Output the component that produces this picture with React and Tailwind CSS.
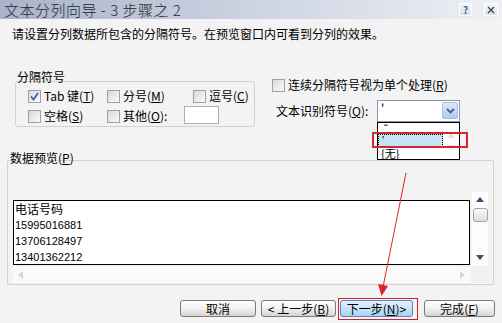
import React from 'react';

const font = "font-['Noto_Sans_CJK_SC','Noto_Sans',sans-serif]";

/**
 * XP style checkbox
 */
function Box({ checked }) {
  return (
    <span className="w-[13px] h-[13px] shrink-0 border border-[#98a2b0] bg-gradient-to-br from-[#d8d8d8] to-[#fbfbfb] flex items-center justify-center">
      {checked && (
        <svg width="9" height="9" viewBox="0 0 9 9">
          <path d="M1 4.5 L3.5 7.5 L8 1" fill="none" stroke="#4b5aa8" strokeWidth="1.8" />
        </svg>
      )}
    </span>
  );
}

function Key({ k }) {
  return (
    <span>(<span className="underline">{k}</span>)</span>
  );
}

function Check({ checked, label, k, suffix, className = '' }) {
  return (
    <div className={`flex items-center gap-[3px] h-[16px] ${className}`}>
      <Box checked={checked} />
      <span className="whitespace-nowrap">{label}<Key k={k} />{suffix}</span>
    </div>
  );
}

function Button({ children, active }) {
  const look = active
    ? 'border-[#5b86b8] bg-gradient-to-b from-[#e6f3fd] to-[#a8d2f2]'
    : 'border-[#7b7b7b] bg-gradient-to-b from-[#ffffff] via-[#f1f1f1] to-[#d4d4d4]';
  return (
    <div className={`h-[17px] rounded-[3px] border ${look} flex items-center justify-center text-[12px] leading-[14px] whitespace-nowrap`}>
      {children}
    </div>
  );
}

function Tri({ dir, color }) {
  const d = {
    up: 'M0 5 L4 0 L8 5 Z',
    down: 'M0 0 L8 0 L4 5 Z',
  }[dir];
  return (
    <svg width="8" height="5" viewBox="0 0 8 5"><path d={d} fill={color} /></svg>
  );
}

function TriH({ dir, color }) {
  const d = dir === 'left' ? 'M5 0 L5 8 L0 4 Z' : 'M0 0 L0 8 L5 4 Z';
  return (
    <svg width="5" height="8" viewBox="0 0 5 8"><path d={d} fill={color} /></svg>
  );
}

export default function App() {
  return (
    <div className={`relative w-[502px] h-[323px] overflow-hidden bg-[#f3f3f3] text-black ${font}`}>
      {/* Title bar */}
      <div className="h-[19px] flex items-center justify-between bg-gradient-to-r from-[#a8b3cb] via-[#ccd3e2] to-[#eef0f5]">
        <span className="pl-[4px] text-[15px] leading-[19px] font-light tracking-[0.5px] text-[#262626] whitespace-nowrap">
          文本分列向导 - 3 步骤之 2
        </span>
        <div className="flex items-center gap-[12px] pr-[4px]">
          <div className="w-[13px] h-[13px] border border-white bg-gradient-to-b from-[#f4f6fa] to-[#d9dee8] flex items-center justify-center text-[10px] leading-none font-bold text-[#3d63a8]">?</div>
          <div className="w-[14px] h-[13px] border border-white bg-gradient-to-b from-[#f4f6fa] to-[#d9dee8] flex items-center justify-center">
            <svg width="8" height="8" viewBox="0 0 8 8">
              <path d="M1 1 L7 7 M7 1 L1 7" stroke="#444" strokeWidth="1.3" />
            </svg>
          </div>
        </div>
      </div>

      {/* Instruction */}
      <p className="mt-[7px] pl-[12px] h-[16px] text-[12px] leading-[16px] whitespace-nowrap">
        请设置分列数据所包含的分隔符号。在预览窗口内可看到分列的效果。
      </p>

      {/* Options */}
      <div className="mt-[28px] flex text-[12px]">
        <div className="ml-[15px] w-[240px]">
          <div className="h-[14px] leading-[14px] pl-[2px]">分隔符号</div>
          <div className="-mt-[3px] h-[46px] border border-[#d3d3cb] rounded-[2px] pt-[6px] pl-[12px]">
            <div className="flex">
              <Check checked label="Tab 键" k="T" className="w-[79px]" />
              <Check label="分号" k="M" className="w-[86px]" />
              <Check label="逗号" k="C" />
            </div>
            <div className="flex items-center mt-[4px]">
              <Check label="空格" k="S" className="w-[79px]" />
              <Check label="其他" k="O" suffix=":" className="w-[77px]" />
              <div className="w-[35px] h-[18px] -mt-[3px] border border-[#a9b0b8] bg-white" />
            </div>
          </div>
        </div>

        <div className="ml-[17px] pt-[7px]">
          <Check label="连续分隔符号视为单个处理" k="R" />
          <div className="mt-[7px] flex items-center h-[22px]">
            <span className="pl-[4px] w-[105px] whitespace-nowrap">文本识别符号<Key k="Q" />:</span>
            <div className="relative w-[83px] h-[22px] border border-[#7f9db9] bg-white flex items-start">
              <span className="flex-1 pl-[3px] leading-[14px]">'</span>
              <div className="mt-[1px] mr-[1px] w-[16px] h-[17px] rounded-[2px] border border-[#a9bde4] bg-gradient-to-b from-[#dfe8fa] to-[#b4c9f0] flex items-center justify-center">
                <svg width="9" height="6" viewBox="0 0 9 6">
                  <path d="M1 1 L4.5 4.5 L8 1" fill="none" stroke="#4d6185" strokeWidth="1.8" />
                </svg>
              </div>

              {/* open list */}
              <div className="absolute left-[-1px] top-[21px] w-[83px] h-[38px] border border-black bg-white flex">
                <div className="w-[65px] text-[11px] leading-none">
                  <div className="h-[11px] pl-[6px] flex items-start font-['Liberation_Sans',sans-serif]">“</div>
                  <div className="h-[13px] pl-[3px] flex items-start border border-dotted border-black bg-[#c4e2f8] font-['Liberation_Sans',sans-serif]">'</div>
                  <div className="h-[12px] pl-[3px] flex items-center whitespace-nowrap">{'{无}'}</div>
                </div>
                <div className="flex-1 flex flex-col items-center justify-around py-[6px]">
                  <Tri dir="up" color="#e9dede" />
                  <Tri dir="down" color="#e9dede" />
                </div>
              </div>

              {/* highlight */}
              <div className="absolute left-[-6px] top-[31px] w-[96px] h-[16px] border-2 border-[#d3272d]" />
            </div>
          </div>
        </div>
      </div>

      {/* Data preview */}
      <div className="mt-[24px] ml-[7px] w-[487px] text-[12px]">
        <div className="h-[14px] leading-[14px] pl-[3px]">数据预览<Key k="P" /></div>
        <div className="-mt-[5px] h-[125px] border border-[#d3d3cb] rounded-[2px] pl-[5px] pt-[31px]">
          <div className="flex">
            <div className="w-[457px]">
              <div className="mt-[8px] h-[65px] overflow-hidden border border-black bg-white pl-[1px]">
                <div className="h-[16px] leading-[16px] text-[12px]">电话号码</div>
                <div className="h-[16px] leading-[16px] text-[11px] font-['Liberation_Sans',sans-serif]">15995016881</div>
                <div className="h-[16px] leading-[16px] text-[11px] font-['Liberation_Sans',sans-serif]">13706128497</div>
                <div className="h-[16px] leading-[16px] text-[11px] font-['Liberation_Sans',sans-serif]">13401362212</div>
              </div>
              <div className="mt-[2px] h-[16px] bg-[#fafafa] flex items-center justify-between px-[5px]">
                <TriH dir="left" color="#d6d6d6" />
                <TriH dir="right" color="#d6d6d6" />
              </div>
            </div>
            <div className="ml-[2px] w-[16px]">
              <div className="h-[74px] bg-[#fcfcfc] flex flex-col items-center pt-[5px]">
                <Tri dir="up" color="#2c4f7c" />
                <div className="mt-[6px] w-[15px] h-[14px] rounded-[3px] border border-[#9aa3ad] bg-gradient-to-b from-[#fafafa] to-[#dcdcdc]" />
                <div className="flex-1" />
                <div className="mb-[6px]"><Tri dir="down" color="#2c4f7c" /></div>
              </div>
              <div className="h-[16px] bg-[#f0f0f0]" />
            </div>
          </div>
        </div>
      </div>

      {/* Buttons */}
      <div className="mt-[15px] flex">
        <div className="ml-[180px] w-[76px]"><Button>取消</Button></div>
        <div className="ml-[5px] w-[75px]"><Button>&lt; 上一步<Key k="B" /></Button></div>
        <div className="relative ml-[4px] w-[73px]">
          <Button active>下一步<Key k="N" /> &gt;</Button>
          <div className="absolute -left-[2px] -right-[5px] -top-[2px] -bottom-[3px] border-[1.5px] border-[#c8262c]" />
        </div>
        <div className="ml-[11px] w-[71px]"><Button>完成<Key k="F" /></Button></div>
      </div>

      {/* Annotation arrow */}
      <svg className="absolute left-0 top-0 pointer-events-none" width="502" height="323" viewBox="0 0 502 323">
        <line x1="406" y1="173" x2="383" y2="287" stroke="#e0232a" strokeWidth="1" />
        <path d="M378 284 L388 286 L381.5 296 Z" fill="#e0232a" />
      </svg>
    </div>
  );
}
